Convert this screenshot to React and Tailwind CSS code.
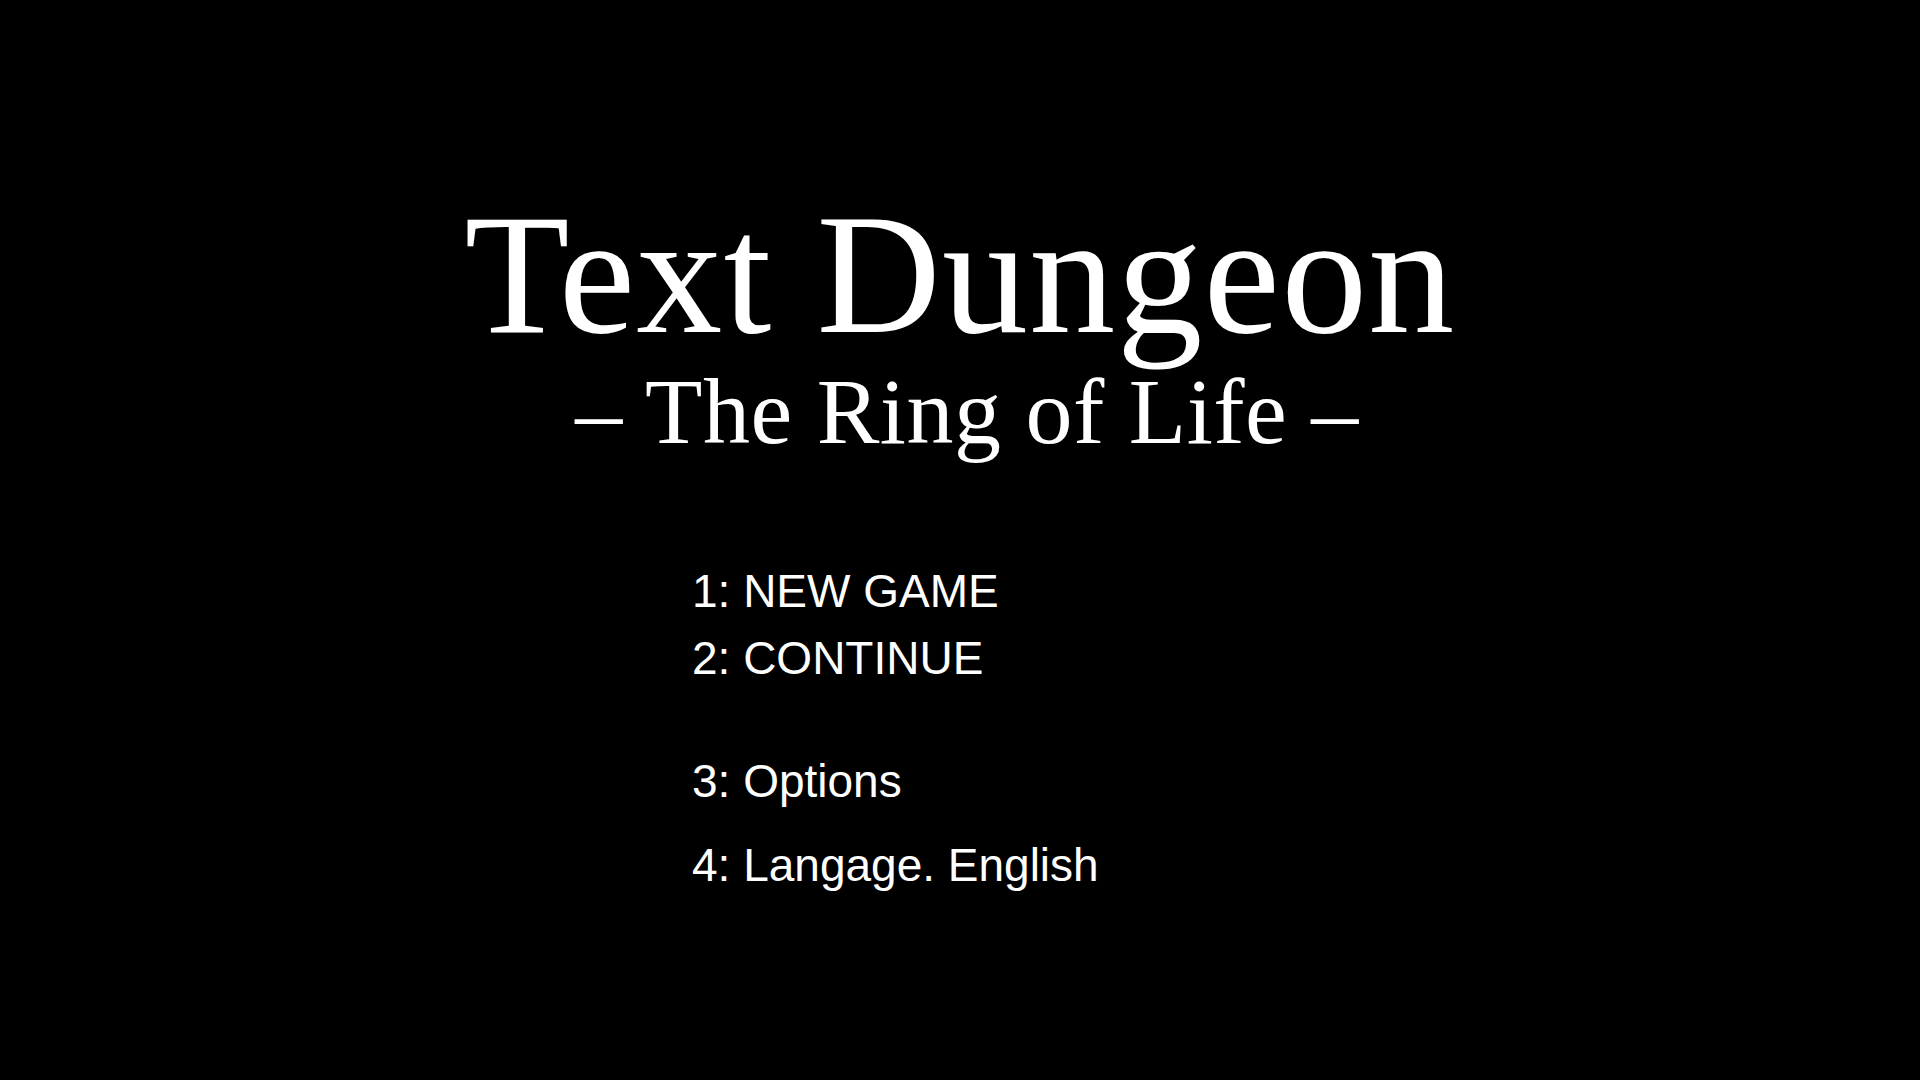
export default function App() {
  const serif = { fontFamily: '"Liberation Serif", "DejaVu Serif", serif' }

  return (
    <div className="w-[1920px] h-[1080px] bg-black text-white overflow-hidden">
      <div className="flex flex-col items-center pt-[176px]" style={serif}>
        <h1 className="text-[172px] leading-[1.15] font-normal whitespace-nowrap tracking-[1.2px]">Text Dungeon</h1>
        <h2 className="text-[94px] leading-[0.8] font-normal whitespace-nowrap pl-[14px] tracking-[0.5px]">– The Ring of Life –</h2>
      </div>

      <ul className="mt-[119px] pl-[692px] text-[46px] leading-none font-['Liberation_Sans',Arial,sans-serif]">
        <li>1: NEW GAME</li>
        <li className="mt-[21px]">2: CONTINUE</li>
        <li className="mt-[77px]">3: Options</li>
        <li className="mt-[38px]">4: Langage. English</li>
      </ul>
    </div>
  )
}
